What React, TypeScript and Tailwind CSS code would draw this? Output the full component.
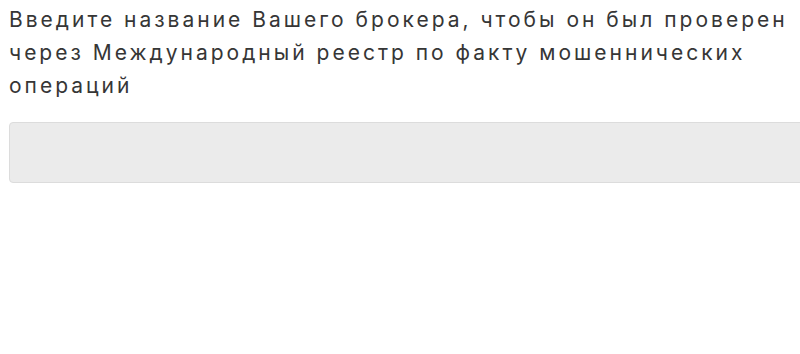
import React from 'react';

const App: React.FC = () => {
  return (
    <div className="w-[800px] h-[354px] overflow-hidden bg-white font-['Inter',sans-serif]">
      <div className="w-[830px] pl-[9px] pt-[3px]">
        {/* Prompt */}
        <p className="text-[21px] leading-[33px] tracking-[3px] text-[#363636] whitespace-nowrap">
          Введите название Вашего брокера, чтобы он был проверен
          <br />
          через Международный реестр по факту мошеннических
          <br />
          операций
        </p>

        {/* Broker input */}
        <input
          type="text"
          className="mt-[20px] block w-full h-[61px] rounded-[4px] border border-[#dcdcdc] bg-[#ebebeb] px-4 text-[18px] text-[#333] outline-none"
        />
      </div>
    </div>
  );
};

export default App;
